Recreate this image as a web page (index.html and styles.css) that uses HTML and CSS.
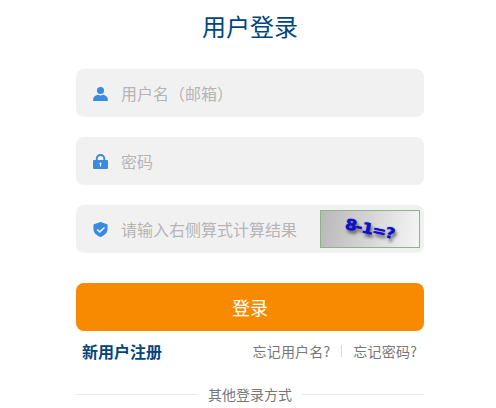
FILE: index.html
```html
<!DOCTYPE html>
<html lang="zh-CN">
<head>
<title>用户登录</title>
<meta charset="utf-8">
<meta name="viewport" content="width=device-width, initial-scale=1">
<link rel="stylesheet" href="styles.css">
</head>
<body>

<main class="login">
  <h2 class="title">用户登录</h2>

  <div class="field">
    <svg class="field-icon" viewBox="0 0 16 16"><circle cx="8" cy="4.800" r="3.800"/><path d="M.2 16v-2.200C.2 11.400 3 9.800 5.200 9.300c1.700 1 3.900 1 5.600 0 2.200.5 5 2.100 5 4.500V16z"/></svg>
    <input class="field-input" type="text" placeholder="用户名（邮箱）">
  </div>

  <div class="field">
    <svg class="field-icon" viewBox="0 0 16 16"><path d="M3 7V5a5 5 0 0 1 10 0v2h-2V5a3 3 0 0 0-6 0v2z"/><path fill-rule="evenodd" d="M1 6.400h14c.6 0 1 .4 1 1V15c0 .6-.4 1-1 1H1c-.6 0-1-.4-1-1V7.400c0-.6.400-1 1-1zM8 9a1.200 1.200 0 0 0-.6 2.200v2.100h1.200v-2.100A1.200 1.200 0 0 0 8 9z"/></svg>
    <input class="field-input" type="password" placeholder="密码">
  </div>

  <div class="field field-captcha">
    <svg class="field-icon" viewBox="0 0 16 16"><path fill-rule="evenodd" d="M8 0l7 2.400c.3.100.5.300.5.600v4.800c0 3.800-3.500 6.800-7.500 8.200C4 14.600.5 11.600.5 7.800V3c0-.3.200-.5.500-.6zM11.800 5.400L7.200 9.200 5 7.400 3.900 8.500l3.300 3.100 5.600-5.200z"/></svg>
    <input class="field-input" type="text" placeholder="请输入右侧算式计算结果">
    <div class="captcha"><span class="captcha-text">8-1=?</span></div>
  </div>

  <button class="submit">登录</button>

  <div class="links">
    <a class="register">新用户注册</a>
    <div class="forgot">
      <a>忘记用户名?</a>
      <span class="sep"></span>
      <a>忘记密码?</a>
    </div>
  </div>

  <div class="other">
    <span class="other-line"></span>
    <span class="other-text">其他登录方式</span>
    <span class="other-line"></span>
  </div>
</main>

</body>
</html>
```

FILE: styles.css
```css
* {
  box-sizing: border-box;
}

html, body {
  overflow: hidden;
}

body {
  margin: 0;
  background: #fff;
  font-family: "Noto Sans CJK SC", "Liberation Sans", sans-serif;
}

.login {
  width: 348px;
  height: 408px;
  margin-left: 76px;
}

.title {
  margin: 0;
  height: 69px;
  padding-top: 8px;
  text-align: center;
  font-size: 24px;
  line-height: 36px;
  font-weight: 400;
  color: #00457c;
}

/* input rows */
.field {
  display: flex;
  align-items: center;
  height: 48px;
  margin-bottom: 20px;
  padding-left: 17px;
  border-radius: 8px;
  background: #f1f1f1;
}

.field-icon {
  flex: none;
  width: 15px;
  height: 15px;
  margin-top: 1px;
  fill: #3a8ae0;
}

.field-input {
  flex: 1;
  min-width: 0;
  margin-left: 13px;
  padding: 0;
  border: 0;
  outline: 0;
  background: transparent;
  font-family: inherit;
  font-size: 16px;
  color: #333;
}

.field-input::placeholder {
  color: #b5b5b5;
  opacity: 1;
}

.field-captcha {
  margin-bottom: 30px;
}

.captcha {
  flex: none;
  display: flex;
  align-items: center;
  justify-content: center;
  width: 100px;
  height: 38px;
  margin-right: 4px;
  border: 1px solid #8cb585;
  background: linear-gradient(100deg, #b8b8b8, #dcdcdc 60%, #f6f6f6);
}

.captcha-text {
  display: block;
  transform: rotate(12deg) scaleX(1.15);
  font-family: "DejaVu Sans", sans-serif;
  font-size: 15px;
  line-height: 18px;
  font-weight: 700;
  letter-spacing: -1px;
  color: #0f0fd2;
  text-shadow: 2px 3px 3px rgba(0, 0, 0, 0.6), 0 0 1px #0f0fd2;
}

.submit {
  display: block;
  width: 100%;
  height: 48px;
  border: 0;
  border-radius: 8px;
  background: #f78a00;
  font-family: inherit;
  font-size: 18px;
  color: #fff;
}

.links {
  display: flex;
  align-items: center;
  justify-content: space-between;
  height: 40px;
  padding: 0 7px 0 6px;
}

.register {
  font-size: 16px;
  font-weight: 700;
  color: #00457c;
}

.forgot {
  display: flex;
  align-items: center;
  gap: 11px;
  font-size: 14px;
  letter-spacing: 0.2px;
  color: #777;
}

.sep {
  width: 1px;
  height: 12px;
  background: #d8d8d8;
}

.other {
  display: flex;
  align-items: center;
  gap: 10px;
  height: 46px;
}

.other-line {
  flex: 1;
  height: 1px;
  background: #e8e8e8;
}

.other-text {
  font-size: 14px;
  color: #777;
}
```
